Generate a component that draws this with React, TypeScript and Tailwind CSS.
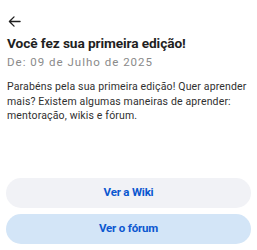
import React from "react";

export default function App() {
  return (
    <div className="w-[257px] h-[250px] bg-white flex flex-col font-['Roboto',sans-serif] text-[#1f1f1f]">
      <div className="px-[8px] pt-[15px] h-[29px]">
        <svg width="13" height="13" viewBox="0 0 14 14" fill="none" stroke="#1f1f1f" strokeWidth="1.4" strokeLinecap="round" strokeLinejoin="round">
          <path d="M13 7H1.5M6.5 2L1.5 7l5 5" />
        </svg>
      </div>
      <div className="pl-[7px] pr-[3px] pt-[5px]">
        <h1 className="text-[13.7px] leading-[18px] font-bold tracking-[-0.1px]">Você fez sua primeira edição!</h1>
        <p className="text-[11.5px] leading-[16px] text-[#8a8a8a] mt-[2px] tracking-[1px]">De: 09 de Julho de 2025</p>
        <p className="text-[10.5px] leading-[14.5px] text-[#303030] mt-[10px] tracking-[0.15px]">
          Parabéns pela sua primeira edição! Quer aprender mais? Existem algumas maneiras de aprender: mentoração, wikis e fórum.
        </p>
      </div>
      <div className="flex-1" />
      <div className="px-[6px] pb-[6px] flex flex-col gap-[6px]">
        <button className="h-[30px] rounded-full bg-[#f1f2f6] text-[#0b57d0] text-[11.5px] font-bold tracking-[-0.2px]">Ver a Wiki</button>
        <button className="h-[30px] rounded-full bg-[#d3e5f7] text-[#0b57d0] text-[11.5px] font-bold tracking-[-0.2px]">Ver o fórum</button>
      </div>
    </div>
  );
}
